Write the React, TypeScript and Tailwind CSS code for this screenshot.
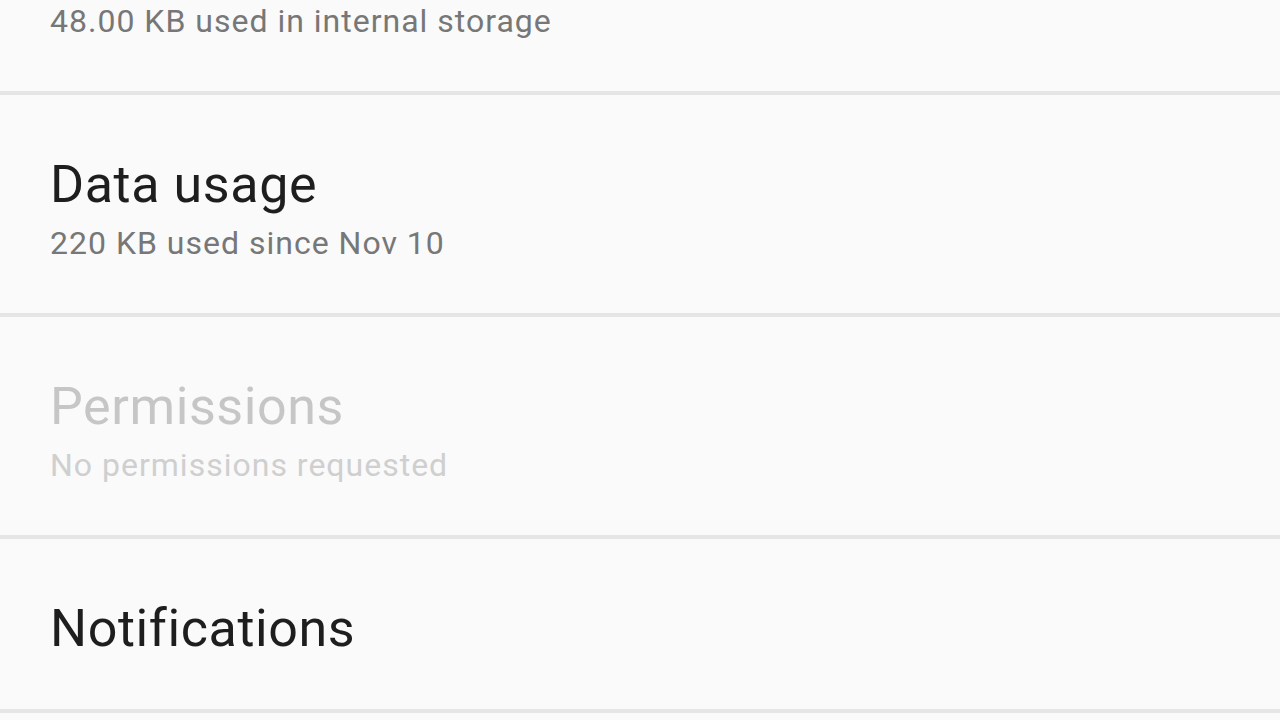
const rows = [
  { title: "Data usage", summary: "220 KB used since Nov 10", disabled: false },
  { title: "Permissions", summary: "No permissions requested", disabled: true },
];

function Summary({ text, disabled }: { text: string; disabled?: boolean }) {
  return (
    <div className={`text-[32px] leading-[40px] tracking-[1px] ${disabled ? "text-[#cfcfcf]" : "text-[#777777]"}`}>{text}</div>
  );
}

function PrefRow({ title, summary, disabled, className = "" }: { title: string; summary?: string; disabled?: boolean; className?: string }) {
  return (
    <div className={`box-border h-[222px] border-b-4 border-[#e5e5e5] pl-[50px] pt-[60px] ${className}`}>
      <div className={`mb-[8px] text-[52px] leading-[60px] tracking-[0.6px] ${disabled ? "text-[#c6c6c6]" : "text-[#1e1e1e]"}`}>{title}</div>
      {summary && <Summary text={summary} disabled={disabled} />}
    </div>
  );
}

export default function App() {
  return (
    <div className="h-[720px] w-[1280px] overflow-hidden bg-[#fafafa]" style={{ fontFamily: "Roboto, 'Noto Sans', sans-serif" }}>
      {/* storage row, scrolled mostly off the top */}
      <div className="box-border h-[95px] border-b-4 border-[#e5e5e5] pl-[50px] pt-[1px]">
        <Summary text="48.00 KB used in internal storage" />
      </div>
      {rows.map((row) => (
        <PrefRow key={row.title} {...row} />
      ))}
      <PrefRow title="Notifications" className="!h-[174px]" />
    </div>
  );
}
